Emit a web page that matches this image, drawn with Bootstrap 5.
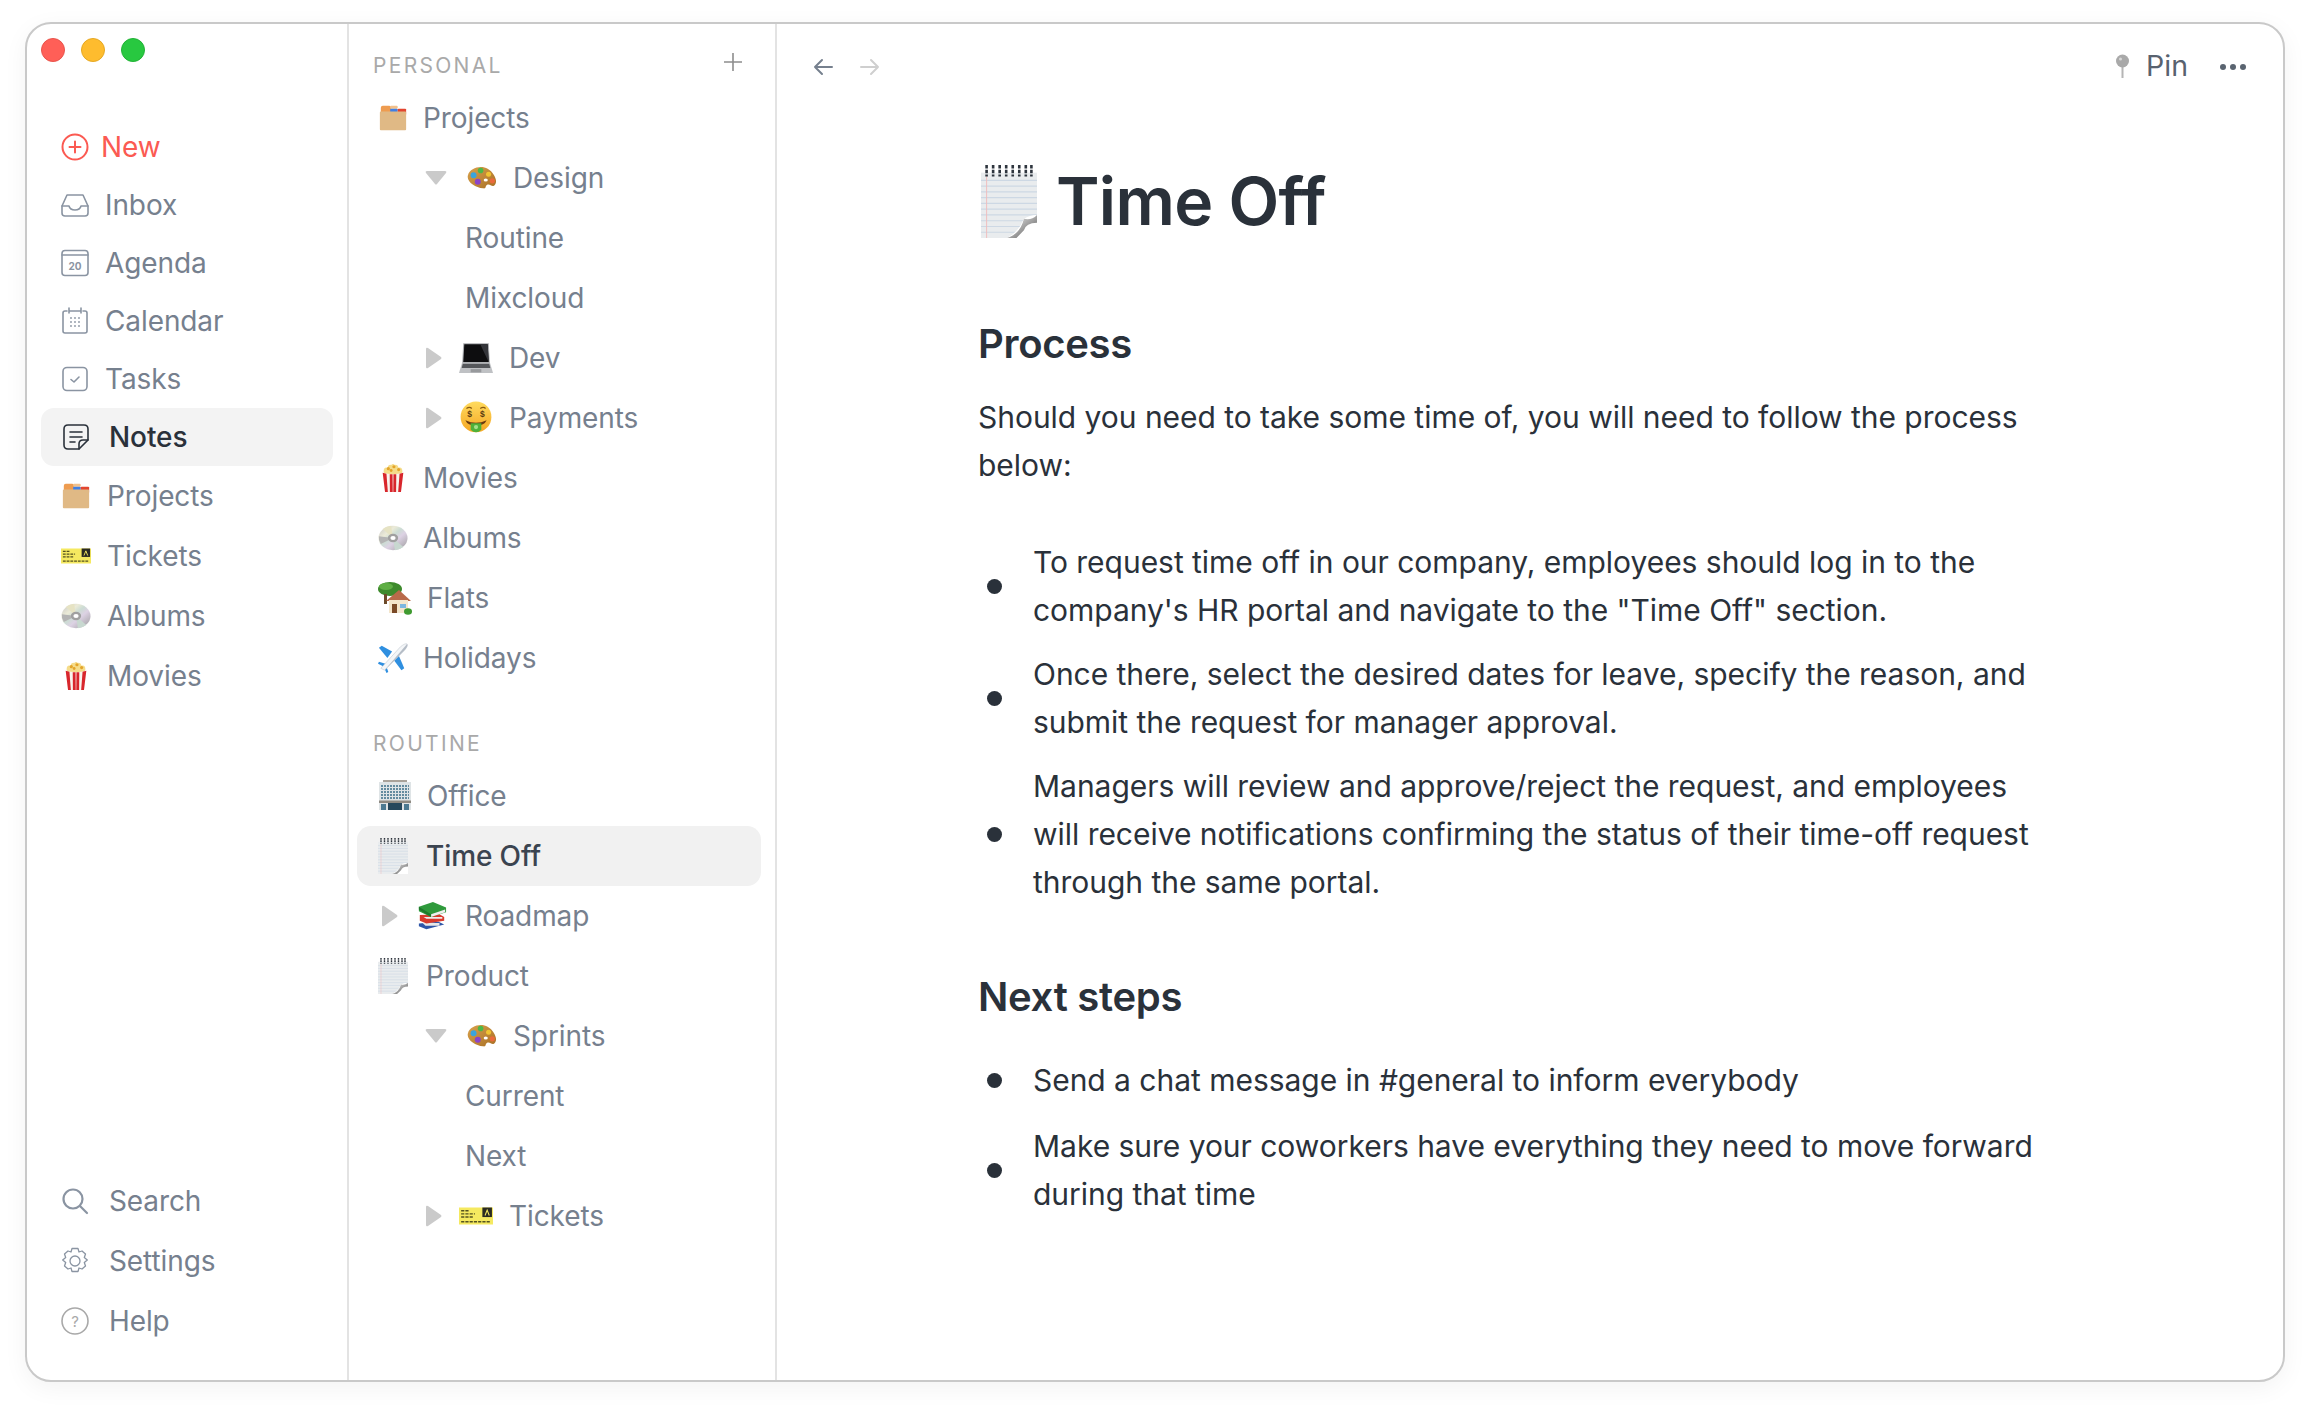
<!DOCTYPE html>
<html lang="en">
<head>
<meta charset="utf-8">
<title>Time Off</title>
<link href="https://cdn.jsdelivr.net/npm/bootstrap@5.3.0/dist/css/bootstrap.min.css" rel="stylesheet">
<style>
body{background:#fff;font-family:Inter,"Liberation Sans",sans-serif;margin:0;height:1408px;overflow:hidden}
.appwin{margin:22px 0 0 25px;width:2260px;height:1360px;border:2px solid #c9c9c9;border-radius:26px;box-shadow:0 6px 24px rgba(0,0,0,.05);overflow:hidden;background:#fff}
.rail{width:322px;flex:none;border-right:2px solid #e3e3e3;padding:14px 0 29px}
.tree{width:428px;flex:none;border-right:2px solid #e3e3e3}
.lights{padding-left:14px;margin-bottom:56px;gap:16px}
.lamp{width:24px;height:24px;border-radius:50%}
.lamp-r{background:#ff5f57;border:1px solid #e8544c}.lamp-y{background:#febc2e;border:1px solid #e5a823}.lamp-g{background:#28c840;border:1px solid #22b236}
.ritem{height:58px;margin:0 14px 0 14px;padding-left:20px;font-size:28px;letter-spacing:-.1px;color:#76808e;border-radius:13px}
.ritem.tall{height:60px}
.ritem.cur{background:#f3f3f3;color:#2a313a;font-weight:500}
.ritem.add{color:#fb5a52}
.mono{width:28px;height:28px;flex:none;fill:none;stroke:#8a94a2;stroke-width:1.6;stroke-linecap:round;stroke-linejoin:round}
.m11{margin-right:12px}.m19{margin-right:19px}.m14{margin-right:15px}.m16{margin-right:16px}.m17{margin-right:18px}.m20{margin-right:20px}.m16r{margin-right:16px}
.emo{width:30px;height:30px;flex:none}
.emo-w{width:34px;height:34px;flex:none}
.note-s{width:30px;height:36px;flex:none;margin-right:18px}
.thead{height:64px;padding:28px 0 8px 24px;font-size:21px;line-height:28px;letter-spacing:2.3px;color:#a9a9a9;margin-right:33px}
.thead.second{height:78px;padding-top:42px}
.titem{height:60px;margin:0 14px 0 8px;font-size:28px;letter-spacing:-.1px;color:#76808e;border-radius:14px}
.titem.cur{background:#f1f1f1;color:#3b4450;font-weight:500}
.l0{padding-left:21px}.lc0{padding-left:25px}.lc1{padding-left:68px}.lr1{padding-left:69px}.lt{padding-left:108px}
.car-d{width:22px;height:14px;flex:none;fill:#cacaca;margin-right:20px}
.car-r{width:16px;height:22px;flex:none;fill:#cacaca;margin-right:17px}
.car-r.m-wide{margin-right:19px}
.topbar{padding:15px 0 0 36px;height:70px}
.arrow{width:20px;height:18px;fill:none;stroke-width:2;stroke-linecap:round;stroke-linejoin:round}
.a-on{stroke:#76808e}.a-off{stroke:#cfcfcf;margin-left:27px}
.pinbox{padding-right:37px;font-size:28.5px;color:#58626f}
.pinmark{margin-right:16px}
.pinmore{margin-left:32px}
.doc{padding-left:201px;width:1274px;color:#2a313a}
.dtitle{font-size:66px;font-weight:600;line-height:82px;margin:66px 0 0;color:#2a313a;letter-spacing:-.7px}
.demo{width:56px;height:73px;margin:0 19px 0 3px;flex:none}
.dsub{font-size:40px;font-weight:600;line-height:48px;margin:0;color:#2a313a;letter-spacing:-.3px}
.dsub.first{margin-top:78px}
.dsub.next{margin-top:67px}
.dp{font-size:30px;letter-spacing:-.03px;line-height:48px;margin:25px 0 0}
.dlist{font-size:30px;letter-spacing:-.03px;line-height:48px;margin:0;padding:0}
.dli{margin-top:16px;list-style:none}
.dli .dot{width:15px;height:15px;border-radius:50%;background:#2a313a;flex:none;margin:0 31px 0 9px}
.l-one{margin-top:49px}
.l-one .dli:first-child{margin-top:0}
.l-two{margin-top:35px}
.l-two .dli:first-child{margin-top:0}
.l-two .dli+.dli{margin-top:18px}
</style>
</head>
<body>
<svg width="0" height="0" class="position-absolute">
<defs>
<linearGradient id="gcd" x1="0" y1="0" x2="1" y2="1"><stop offset="0" stop-color="#c4c4c4"/><stop offset=".3" stop-color="#ecebd8"/><stop offset=".45" stop-color="#ccdcd4"/><stop offset=".6" stop-color="#ddd2e4"/><stop offset="1" stop-color="#9a9a9a"/></linearGradient>
<linearGradient id="gpal" x1="0" y1="0" x2="1" y2="1"><stop offset="0" stop-color="#d9a24c"/><stop offset="1" stop-color="#a86f25"/></linearGradient>
<linearGradient id="gface" x1="0" y1="0" x2="0" y2="1"><stop offset="0" stop-color="#ffdb5e"/><stop offset="1" stop-color="#f5a623"/></linearGradient>
<linearGradient id="gcurl" x1="0" y1="0" x2="1" y2="1"><stop offset="0" stop-color="#fafafa"/><stop offset="1" stop-color="#555"/></linearGradient>
<symbol id="e-box" viewBox="0 0 32 32"><rect x="3" y="3" width="11" height="9" rx="2" fill="#ee9c50"/><rect x="13" y="3" width="8" height="3" rx="1" fill="#f2c08a"/><rect x="13" y="6" width="8" height="6" rx="1" fill="#3f7fe4"/><rect x="21" y="6" width="9" height="7" rx="1" fill="#e2452f"/><rect x="2" y="9" width="28" height="20" rx="1" fill="#e0b985"/></symbol>
<symbol id="e-ticket" viewBox="0 0 32 32"><rect x="0" y="8" width="32" height="16" fill="#f5e960"/><rect x="22" y="8" width="9" height="9" fill="#2a2a22"/><path d="M24.500 15.500l2-5 2 5" fill="none" stroke="#f5e960" stroke-width="1"/><path d="M2 11h7M2 14h13M2 17h11M2 21.500h27" stroke="#55531f" stroke-width="1.400" stroke-dasharray="3 1"/></symbol>
<symbol id="e-cd" viewBox="0 0 32 32"><ellipse cx="16" cy="16" rx="15.500" ry="13" fill="url(#gcd)"/><path d="M16 16L5 6.500A15.500 13 0 0 1 14 3z" fill="#e6e3c4"/><path d="M16 16L27 25.500A15.500 13 0 0 1 18 29z" fill="#c8d8d0"/><path d="M16 16L3 22.500A15.500 13 0 0 1 1 14z" fill="#b4b4b4"/><ellipse cx="16" cy="16" rx="5.500" ry="4.500" fill="#a0a0a0"/><ellipse cx="16" cy="16" rx="2.800" ry="2.200" fill="#fff"/></symbol>
<symbol id="e-pop" viewBox="0 0 32 32"><path d="M6 9q0-5 4-4 1-4 4-3 2-2 4 0 3-1 4 3 4-1 4 4l-1 4H7z" fill="#f5dc8a"/><circle cx="11" cy="6" r="1.700" fill="#e3a42a"/><circle cx="17" cy="4" r="1.700" fill="#e3a42a"/><circle cx="22" cy="7" r="1.700" fill="#e3a42a"/><circle cx="14" cy="8" r="1.500" fill="#e3a42a"/><path d="M5 10.500q11 3 22 0L24.500 31h-17z" fill="#f8f4ee"/><path d="M5 10.500l4 1L10.500 31h-3zM12.500 12h3l.2 19h-3zM19.500 12h-3l-.2 19h3zM27 10.500l-4 1L21.500 31h3z" fill="#d8262c"/></symbol>
<symbol id="e-pal" viewBox="0 0 32 32"><path d="M1 13c2-8 14-11 21-7s11 13 8 17-5-1-8 0-1 5-5 4C9 26-1 20 1 13z" fill="url(#gpal)"/><circle cx="7" cy="13" r="3.200" fill="#39a4dd"/><circle cx="14.500" cy="8" r="3" fill="#4cb848"/><circle cx="23" cy="12" r="2.700" fill="#f0c432"/><circle cx="27" cy="19" r="2.800" fill="#ea6a3c"/><circle cx="11.500" cy="20" r="3.200" fill="#8a44c8"/><ellipse cx="20" cy="18" rx="2.200" ry="1.600" fill="#fff"/></symbol>
<symbol id="e-lap" viewBox="0 0 32 32"><path d="M4 2h24l1 19H3z" fill="#a8aaae"/><path d="M5 3h22l1 17H4z" fill="#0d0d0f"/><path d="M20 3h7l1 17z" fill="#34353a"/><path d="M3 20h26l3 10H0z" fill="#bfc1c4"/><path d="M3.500 21.500h25l1 4h-27z" fill="#55575b"/><rect x="11" y="26.500" width="10" height="3" fill="#97999c"/></symbol>
<symbol id="e-money" viewBox="0 0 32 32"><circle cx="16" cy="15" r="14.500" fill="url(#gface)"/><path d="M7 7q3-2 5 0M20 7q3-2 5 0" stroke="#8a5a10" stroke-width="1.200" fill="none"/><text x="10" y="15" font-size="8" font-weight="700" text-anchor="middle" fill="#5a3a10" font-family="Liberation Sans">$</text><text x="22" y="15" font-size="8" font-weight="700" text-anchor="middle" fill="#5a3a10" font-family="Liberation Sans">$</text><path d="M6 18q10 5 20 0-2 5-10 5t-10-5z" fill="#6a3a10"/><path d="M11 21h10v6q-5 5-10 0z" fill="#4fb13a"/><circle cx="16" cy="24.500" r="2" fill="#a5e08a"/></symbol>
<symbol id="e-house" viewBox="0 0 34 34"><ellipse cx="12" cy="8" rx="12" ry="7" fill="#3d8a2c"/><ellipse cx="8" cy="5.500" rx="7" ry="3.500" fill="#5eae44"/><rect x="6" y="13" width="3" height="10" fill="#6b4a2a"/><path d="M8 20L21 9l12 11z" fill="#b86a4a"/><path d="M11 19h19v13H11z" fill="#f4e6cc"/><rect x="14" y="23" width="5" height="9" fill="#7a4a28"/><rect x="22" y="23" width="6" height="4" fill="#7cb7e0"/><ellipse cx="30" cy="30.500" rx="4" ry="3.200" fill="#3f9a30"/></symbol>
<symbol id="e-plane" viewBox="0 0 32 32"><path d="M15 9L4 3 1 5l9 11z" fill="#2f8fe0"/><path d="M16 17l9 12 3-2-6-14z" fill="#2f8fe0"/><path d="M1 20l-1 2 6 3 3 7 2-1-3-9z" fill="#2f8fe0"/><path d="M3 27L24 4q5-4 7-3t-3 7L7 29z" fill="#f4f6f8" stroke="#bfc6ce" stroke-width=".6"/><path d="M7 29L31 1q1 3-3 7z" fill="#b4bcc6"/></symbol>
<symbol id="e-office" viewBox="0 0 34 32"><rect x="5" y="0" width="24" height="3" fill="#a9a29a"/><rect x="1" y="2" width="32" height="28" fill="#dfe4e6"/><path d="M3 6h28M3 9h28M3 12h28M3 15h28M3 18h28" stroke="#3d6e88" stroke-width="1.700" stroke-dasharray="2 1"/><rect x="1" y="20.500" width="32" height="2.500" fill="#8f8a82"/><rect x="10" y="23" width="14" height="7" fill="#27485c"/><rect x="3" y="24" width="5" height="6" fill="#4d7a92"/><rect x="26" y="24" width="5" height="6" fill="#4d7a92"/></symbol>
<symbol id="e-note" viewBox="0 0 30 38" preserveAspectRatio="none"><rect x="0" y="4" width="30" height="34" fill="#e9ecee"/><path d="M0 8h30M0 11h30M0 14h30M0 17h30M0 20h30M0 23h30M0 26h30M0 29h30M0 32h30M0 35h30" stroke="#cdd8e4" stroke-width=".6"/><path d="M3 6v32" stroke="#f0bcbc" stroke-width=".5"/><path d="M3 0v6M6.500 0v6M10 0v6M13.500 0v6M17 0v6M20.500 0v6M24 0v6M27 0v6" stroke="#2e353e" stroke-width="1.400" stroke-dasharray="1.800 .7"/><path d="M30 38H14q6-3 9-10 3-2 7-2z" fill="#fff"/><path d="M14 38q7-2 9-10 4 1 7-2v4q-6 0-7 4l-4 4z" fill="url(#gcurl)"/></symbol>
<symbol id="e-books" viewBox="0 0 32 32"><path d="M2 24l21-2 6 3-19 5-8-3z" fill="#2f56a8"/><path d="M6 23.500h18v3H9z" fill="#e8e8e8"/><path d="M3 15l21-1 5 3v4l-19 3-7-3z" fill="#d93a2c"/><path d="M7 17h20v2H10z" fill="#eeeeee"/><path d="M2 6l15-5 14 6v5l-16 5-13-6z" fill="#2f9a3c"/><path d="M15 14l15-5v3l-15 5z" fill="#f0f0f0"/><path d="M2 6l13 8v3L2 9z" fill="#1f7a2c"/></symbol>
</defs>
</svg>

<div class="appwin d-flex">
  <nav class="rail d-flex flex-column">
    <div class="lights d-flex"><span class="lamp lamp-r"></span><span class="lamp lamp-y"></span><span class="lamp lamp-g"></span></div>
    <div class="ritem add d-flex align-items-center"><svg class="mono m11" viewBox="0 0 28 28" style="stroke:#fb5a52;stroke-width:2"><circle cx="14" cy="14" r="12.500"/><path d="M14 8.500v11M8.500 14h11"/></svg>New</div>
    <div class="ritem d-flex align-items-center"><svg class="mono m16r" viewBox="0 0 28 28"><path d="M6 4h16l5 11v7q0 3-3 3H4q-3 0-3-3v-7z"/><path d="M1 15h7q1 4 6 4t6-4h7"/></svg>Inbox</div>
    <div class="ritem d-flex align-items-center"><svg class="mono m16r" viewBox="0 0 28 28"><rect x="1" y="1.500" width="26" height="25" rx="3"/><path d="M1 6h26"/><text x="14" y="21" font-size="10" font-weight="700" text-anchor="middle" fill="#8a94a2" stroke="none" font-family="Inter">20</text></svg>Agenda</div>
    <div class="ritem d-flex align-items-center"><svg class="mono m16r" viewBox="0 0 28 28"><path d="M6 4H4q-2 0-2 2v18q0 2 2 2h20q2 0 2-2V6q0-2-2-2h-2"/><path d="M9 4h10M8 1v5M20 1v5"/><path d="M10 11h0M14 11h0M18 11h0M10 15h0M14 15h0M18 15h0M10 19h0M14 19h0M18 19h0" stroke-width="1.800"/></svg>Calendar</div>
    <div class="ritem d-flex align-items-center"><svg class="mono m16r" viewBox="0 0 28 28"><rect x="2" y="2.500" width="24" height="23" rx="4"/><path d="M10 14.500l3 2.500 5-5"/></svg>Tasks</div>
    <div class="ritem cur d-flex align-items-center"><svg class="mono m19" viewBox="0 0 28 28" style="stroke:#2a313a;margin-left:1px"><path d="M17 26H6q-4 0-4-4V6q0-4 4-4h16q4 0 4 4v11z"/><path d="M17 26v-5q0-4 4-4h5"/><path d="M8 9h12M8 14h12M8 19h5"/></svg>Notes</div>
    <div class="ritem tall d-flex align-items-center"><svg class="emo m16r"><use href="#e-box"/></svg>Projects</div>
    <div class="ritem tall d-flex align-items-center"><svg class="emo m16r"><use href="#e-ticket"/></svg>Tickets</div>
    <div class="ritem tall d-flex align-items-center"><svg class="emo m16r"><use href="#e-cd"/></svg>Albums</div>
    <div class="ritem tall d-flex align-items-center"><svg class="emo m16r"><use href="#e-pop"/></svg>Movies</div>
    <div class="mt-auto">
      <div class="ritem tall d-flex align-items-center"><svg class="mono m20" viewBox="0 0 28 28" style="stroke-width:2.200"><circle cx="12" cy="12" r="9.500"/><path d="M19 19l7 7"/></svg>Search</div>
      <div class="ritem tall d-flex align-items-center"><svg class="mono m20" viewBox="0 0 28 28" style="stroke-width:1.300"><path d="M11 1.500h6l1 3.500 3-1 3.500 3-1.200 3.500 3 2.500-3 2.500 1.200 3.500-3.500 3-3-1-1 3.500h-6l-1-3.500-3 1-3.500-3 1.200-3.500-3-2.500 3-2.500L3.500 7 7 4l3 1z"/><circle cx="14" cy="14" r="5"/></svg>Settings</div>
      <div class="ritem tall d-flex align-items-center"><svg class="mono m20" viewBox="0 0 28 28" style="stroke:#a9a9a9"><circle cx="14" cy="14" r="13"/><text x="14" y="19.500" font-size="15" text-anchor="middle" fill="#a9a9a9" stroke="none" font-family="Inter">?</text></svg>Help</div>
    </div>
  </nav>

  <aside class="tree">
    <div class="thead d-flex justify-content-between align-items-center"><span>PERSONAL</span><svg width="18" height="18" viewBox="0 0 18 18" class="mb-2"><path d="M9 0v18M0 9h18" stroke="#8d8d8d" stroke-width="1.600"/></svg></div>
    <div class="titem l0 d-flex align-items-center"><svg class="emo m14"><use href="#e-box"/></svg>Projects</div>
    <div class="titem lc1 d-flex align-items-center"><svg class="car-d" viewBox="0 0 22 14"><path d="M2 0h18q2 0 1 2L12 13q-1 1-2 0L1 2Q0 0 2 0z"/></svg><svg class="emo m16"><use href="#e-pal"/></svg>Design</div>
    <div class="titem lt d-flex align-items-center">Routine</div>
    <div class="titem lt d-flex align-items-center">Mixcloud</div>
    <div class="titem lr1 d-flex align-items-center"><svg class="car-r" viewBox="0 0 16 22"><path d="M0 2q0-2 2-1l13 9q1 1 0 2L2 21q-2 1-2-1z"/></svg><svg class="emo-w m16"><use href="#e-lap"/></svg>Dev</div>
    <div class="titem lr1 d-flex align-items-center"><svg class="car-r" viewBox="0 0 16 22"><path d="M0 2q0-2 2-1l13 9q1 1 0 2L2 21q-2 1-2-1z"/></svg><svg class="emo-w m16"><use href="#e-money"/></svg>Payments</div>
    <div class="titem l0 d-flex align-items-center"><svg class="emo m14"><use href="#e-pop"/></svg>Movies</div>
    <div class="titem l0 d-flex align-items-center"><svg class="emo m14"><use href="#e-cd"/></svg>Albums</div>
    <div class="titem l0 d-flex align-items-center"><svg class="emo-w m14"><use href="#e-house"/></svg>Flats</div>
    <div class="titem l0 d-flex align-items-center"><svg class="emo m14"><use href="#e-plane"/></svg>Holidays</div>
    <div class="thead second">ROUTINE</div>
    <div class="titem l0 d-flex align-items-center"><svg class="emo-w m14"><use href="#e-office"/></svg>Office</div>
    <div class="titem cur l0 d-flex align-items-center"><svg class="note-s"><use href="#e-note"/></svg>Time Off</div>
    <div class="titem lc0 d-flex align-items-center"><svg class="car-r m-wide" viewBox="0 0 16 22"><path d="M0 2q0-2 2-1l13 9q1 1 0 2L2 21q-2 1-2-1z"/></svg><svg class="emo m17"><use href="#e-books"/></svg>Roadmap</div>
    <div class="titem l0 d-flex align-items-center"><svg class="note-s"><use href="#e-note"/></svg>Product</div>
    <div class="titem lc1 d-flex align-items-center"><svg class="car-d" viewBox="0 0 22 14"><path d="M2 0h18q2 0 1 2L12 13q-1 1-2 0L1 2Q0 0 2 0z"/></svg><svg class="emo m16"><use href="#e-pal"/></svg>Sprints</div>
    <div class="titem lt d-flex align-items-center">Current</div>
    <div class="titem lt d-flex align-items-center">Next</div>
    <div class="titem lr1 d-flex align-items-center"><svg class="car-r" viewBox="0 0 16 22"><path d="M0 2q0-2 2-1l13 9q1 1 0 2L2 21q-2 1-2-1z"/></svg><svg class="emo-w m16"><use href="#e-ticket"/></svg>Tickets</div>
  </aside>

  <main class="flex-grow-1">
    <div class="topbar d-flex align-items-center justify-content-between">
      <div class="d-flex align-items-center">
        <svg class="arrow a-on" viewBox="0 0 20 18"><path d="M19 9H2M9 2L2 9l7 7"/></svg>
        <svg class="arrow a-off" viewBox="0 0 20 18"><path d="M1 9h17M11 2l7 7-7 7"/></svg>
      </div>
      <div class="pinbox d-flex align-items-center">
        <svg width="15" height="25" viewBox="0 0 15 25" class="pinmark"><path d="M7.500 10v14" stroke="#b5b5b5" stroke-width="2"/><circle cx="7.500" cy="7" r="6.500" fill="#a9a9a9"/><circle cx="5.500" cy="5" r="1.500" fill="#d8d8d8"/></svg>
        <span>Pin</span>
        <svg width="26" height="6" viewBox="0 0 26 6" class="pinmore"><circle cx="3" cy="3" r="3" fill="#5a6470"/><circle cx="13" cy="3" r="3" fill="#5a6470"/><circle cx="23" cy="3" r="3" fill="#5a6470"/></svg>
      </div>
    </div>
    <article class="doc">
      <h1 class="dtitle d-flex align-items-center"><svg class="demo"><use href="#e-note"/></svg>Time Off</h1>
      <h2 class="dsub first">Process</h2>
      <p class="dp">Should you need to take some time of, you will need to follow the process below:</p>
      <ul class="dlist l-one">
        <li class="dli d-flex align-items-center"><span class="dot"></span><span>To request time off in our company, employees should log in to the company's HR portal and navigate to the "Time Off" section.</span></li>
        <li class="dli d-flex align-items-center"><span class="dot"></span><span>Once there, select the desired dates for leave, specify the reason, and submit the request for manager approval.</span></li>
        <li class="dli d-flex align-items-center"><span class="dot"></span><span>Managers will review and approve/reject the request, and employees will receive notifications confirming the status of their time-off request through the same portal.</span></li>
      </ul>
      <h2 class="dsub next">Next steps</h2>
      <ul class="dlist l-two">
        <li class="dli d-flex align-items-center"><span class="dot"></span><span>Send a chat message in #general to inform everybody</span></li>
        <li class="dli d-flex align-items-center"><span class="dot"></span><span>Make sure your coworkers have everything they need to move forward during that time</span></li>
      </ul>
    </article>
  </main>
</div>
<script src="https://cdn.jsdelivr.net/npm/bootstrap@5.3.0/dist/js/bootstrap.bundle.min.js"></script>
</body>
</html>
